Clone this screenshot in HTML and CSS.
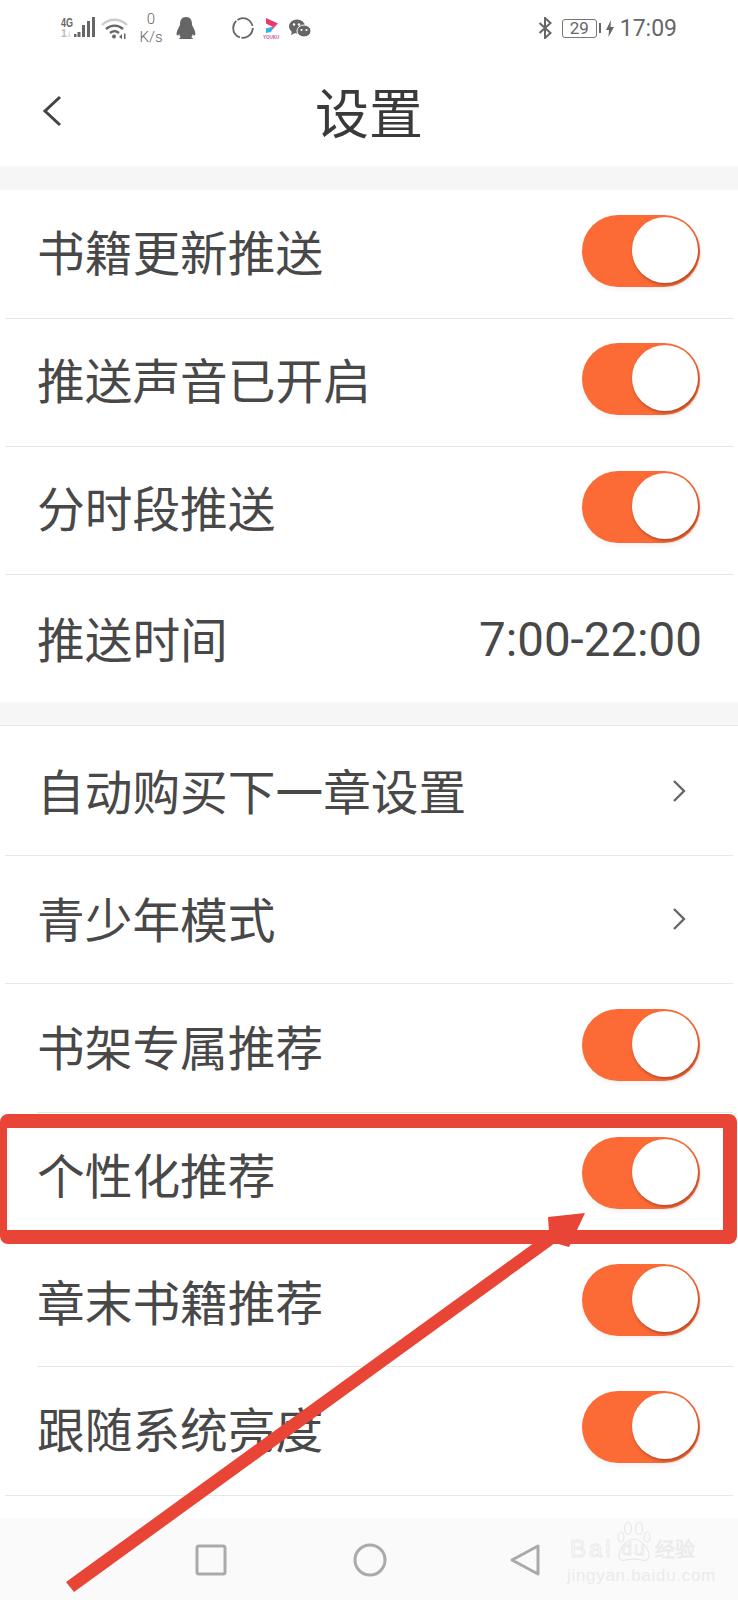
FILE: index.html
```html
<!doctype html>
<html lang="zh-CN">
<head>
  <meta charset="UTF-8">
  <meta name="viewport" content="width=device-width, initial-scale=1">
  <title>设置</title>

  <link rel="stylesheet" href="styles.css">
</head>
<body>

<main>
  <div class="status">
    <div class="status-left">
      <svg class="ic-signal" width="34" height="24" viewBox="0 0 34 24">
        <text x="0" y="11" class="net" textLength="12" lengthAdjust="spacingAndGlyphs">4G</text>
        <text x="0" y="21" class="net faint" textLength="11" lengthAdjust="spacingAndGlyphs">1↓</text>
        <path d="M13 21v-3h2.500v3zM16.500 21v-5h3v5zM21 21v-12h3v12zM26 21v-16h3v16zM31 21v-20h3v20z" fill="#666"/>
      </svg>
      <svg class="ic-wifi" width="27" height="22" viewBox="0 0 27 22">
        <path d="M1 8c7-7 18-7 25 0" fill="none" stroke="#ccc" stroke-width="2.400"/>
        <path d="M5 12c5-4.500 12-4.500 17 0M9 16c3-2.500 6-2.500 9 0" fill="none" stroke="#666" stroke-width="2.400"/>
        <circle cx="13" cy="19.500" r="2" fill="#666"/>
        <path d="M18 20l3-3v5zM23 16.500h1.500v5.500h-1.500z" fill="#666"/>
      </svg>
      <div class="speed"><span>0</span><span>K/s</span></div>
      <svg class="ic-qq" width="20" height="23" viewBox="0 0 20 23">
        <path d="M10 0c4.500 0 6 3.500 6 7 0 1.500 1 3 2 5 1.500 3 2 6 .5 6.500-.6.2-1.200-.5-1.800-1.500 0 1.500-.7 2.500-1.700 3.300 1.200.4 2 1 2 1.700H3c0-.7.800-1.300 2-1.700-1-.8-1.700-1.800-1.700-3.300-.6 1-1.200 1.700-1.800 1.500C0 18 .5 15 2 12c1-2 2-3.500 2-5 0-3.500 1.500-7 6-7z" fill="#666"/>
      </svg>
      <svg class="ic-ring" width="22" height="22" viewBox="0 0 22 22">
        <circle cx="11" cy="11" r="9.800" fill="none" stroke="#666" stroke-width="1.800" stroke-dasharray="17 1.500 20 1.500 19 2.500"/>
      </svg>
      <svg class="ic-youku" width="18" height="21" viewBox="0 0 18 21">
        <path d="M3 0l12 5.500-5 3.500-7-3.500z" fill="#e8386d"/>
        <path d="M15 5.500L8 13H3v-2.500L10 9z" fill="#e8386d"/>
        <path d="M3 10.500L10 9l-2 5-5 1z" fill="#29b6e8"/>
        <text x="0" y="20.500" class="youku">YOUKU</text>
      </svg>
      <svg class="ic-wechat" width="22" height="19" viewBox="0 0 22 19">
        <ellipse cx="8" cy="7.500" rx="8" ry="7" fill="#666"/>
        <path d="M3 12l-1 4 4-2z" fill="#666"/>
        <ellipse cx="15" cy="12" rx="7" ry="6" fill="#666" stroke="#fff" stroke-width="1"/>
        <circle cx="5" cy="5.500" r="1.200" fill="#fff"/>
        <circle cx="10" cy="5.500" r="1.200" fill="#fff"/>
        <circle cx="12.500" cy="11" r="1.100" fill="#fff"/>
        <circle cx="17.500" cy="11" r="1.100" fill="#fff"/>
      </svg>
    </div>
    <div class="status-right">
      <svg class="ic-bt" width="15" height="22" viewBox="0 0 15 22">
        <path d="M1.500 6l11 10-5.500 5V1l5.500 5-11 10" fill="none" stroke="#666" stroke-width="2"/>
      </svg>
      <div class="battery"><span>29</span></div>
      <div class="battery-nub"></div>
      <svg class="ic-bolt" width="8" height="17" viewBox="0 0 8 17">
        <path d="M5 0L0 10h3l-.5 7L8 7H4.500z" fill="#666"/>
      </svg>
      <span class="clock">17:09</span>
    </div>
  </div>

  <header class="topbar">
    <svg class="back" width="20" height="32" viewBox="0 0 20 32">
      <path d="M18 2L3 16l15 14" fill="none" stroke="#444" stroke-width="3"/>
    </svg>
    <h1>设置</h1>
  </header>

  <div class="gap"></div>

  <section>
    <div class="row"><span class="label">书籍更新推送</span><div class="toggle"></div></div>
    <div class="row"><span class="label">推送声音已开启</span><div class="toggle"></div></div>
    <div class="row"><span class="label">分时段推送</span><div class="toggle"></div></div>
    <div class="row plain last"><span class="label">推送时间</span><span class="value">7:00-22:00</span></div>
  </section>

  <div class="gap gap-line"></div>

  <section>
    <div class="row plain">
      <span class="label">自动购买下一章设置</span>
      <svg class="more" width="14" height="24" viewBox="0 0 14 24"><path d="M2 2l10 10L2 22" fill="none" stroke="#666" stroke-width="2.400"/></svg>
    </div>
    <div class="row plain">
      <span class="label">青少年模式</span>
      <svg class="more" width="14" height="24" viewBox="0 0 14 24"><path d="M2 2l10 10L2 22" fill="none" stroke="#666" stroke-width="2.400"/></svg>
    </div>
    <div class="row lower inset"><span class="label">书架专属推荐</span><div class="toggle"></div></div>
    <div class="row short nosep"><span class="label">个性化推荐</span><div class="toggle"></div></div>
    <div class="row short inset"><span class="label">章末书籍推荐</span><div class="toggle"></div></div>
    <div class="row tall"><span class="label">跟随系统亮度</span><div class="toggle"></div></div>
  </section>

  <div class="spacer"></div>

  <nav class="navbar">
    <svg class="nav-square" width="32" height="32" viewBox="0 0 32 32"><rect x="2" y="2" width="28" height="28" rx="2" fill="none" stroke="#aaa" stroke-width="3"/></svg>
    <svg width="34" height="34" viewBox="0 0 34 34"><circle cx="17" cy="17" r="15" fill="none" stroke="#aaa" stroke-width="3"/></svg>
    <svg width="32" height="34" viewBox="0 0 32 34"><path d="M29 3L3 17l26 14z" fill="none" stroke="#aaa" stroke-width="3" stroke-linejoin="round"/></svg>
  </nav>
</main>

<div class="watermark">
  <svg class="paw" width="34" height="42" viewBox="0 0 34 42">
    <g fill="none" stroke="#e8e8e8" stroke-width="1.200">
      <ellipse cx="4" cy="15" rx="3" ry="5"/>
      <ellipse cx="11" cy="6.500" rx="3.500" ry="6"/>
      <ellipse cx="22" cy="6.500" rx="3.500" ry="6"/>
      <ellipse cx="30" cy="15" rx="3" ry="5"/>
      <path d="M17 17c-6 0-15 9-15 16 0 6 4 6 7 5 5-1 11-1 16 0 3 1 7 1 7-5 0-7-9-16-15-16z"/>
    </g>
  </svg>
  <div class="wm-top"><span class="wm-bai">Bai</span><span class="wm-du">du</span><span class="wm-cn">经验</span></div>
  <div class="wm-sub">jingyan.baidu.com</div>
</div>

<div class="highlight"></div>
<svg class="arrow" width="738" height="1600" viewBox="0 0 738 1600">
  <path d="M66 1582L549 1232L548 1217L585 1213L569 1247L555 1243L74 1592z" fill="#e84536"/>
</svg>

</body>
</html>
```

FILE: styles.css
```css
* {
    margin: 0;
    padding: 0;
    box-sizing: border-box;
}

html, body {
    height: 100%;
}

body {
    position: relative;
    overflow: hidden;
    background-color: #fff;
    color: #484848;
    font-family: "Noto Sans CJK SC", "Noto Sans", sans-serif;
}

main {
    height: 1600px;
    display: flex;
    flex-direction: column;
}

.status {
    height: 56px;
    display: flex;
    justify-content: space-between;
    align-items: center;
    padding: 0 61px;
    color: #666;
}

.status-left, .status-right {
    display: flex;
    align-items: center;
}

.net {
    font-family: "Liberation Sans", sans-serif;
    font-size: 12px;
    font-weight: bold;
    fill: #666;
}

.net.faint {
    fill: #bbb;
    font-size: 10px;
}

.youku {
    font-family: "Liberation Sans", sans-serif;
    font-size: 4.500px;
    font-weight: bold;
    fill: #c55a9a;
}

.ic-wifi {
    margin-left: 6px;
}

.speed {
    width: 26px;
    margin-left: 10px;
    display: flex;
    flex-direction: column;
    align-items: center;
    font-family: Roboto, sans-serif;
    font-size: 15px;
    font-weight: 300;
    line-height: 18px;
}

.ic-qq {
    margin-left: 12px;
}

.ic-ring {
    margin-left: 36px;
}

.ic-youku {
    margin-left: 9px;
}

.ic-wechat {
    margin-left: 8px;
}

.battery {
    width: 35px;
    height: 19px;
    margin-left: 9px;
    border: 1px solid #777;
    border-radius: 3px;
    display: flex;
    align-items: center;
    justify-content: center;
    font-family: Roboto, sans-serif;
    font-size: 17px;
    line-height: 1;
}

.battery-nub {
    width: 2px;
    height: 10px;
    margin-left: 2px;
    background-color: #666;
}

.ic-bolt {
    margin-left: 5px;
}

.clock {
    margin-left: 6px;
    font-family: Roboto, sans-serif;
    font-size: 23px;
    line-height: 1;
}

.topbar {
    height: 110px;
    display: flex;
    align-items: center;
    justify-content: center;
    position: relative;
}

.topbar h1 {
    font-size: 54px;
    font-weight: 400;
    line-height: 1;
    color: #3a3a3a;
}

.back {
    position: absolute;
    left: 42px;
    top: 39px;
}

.gap {
    height: 24px;
    background-color: #f6f6f6;
}

.gap-line {
    border-bottom: 1px solid #e8e8e8;
}

.row {
    height: 128.500px;
    padding: 0 38px 7px 37px;
    display: flex;
    align-items: center;
    justify-content: space-between;
    font-size: 47.700px;
    line-height: 1;
    position: relative;
}

section:first-of-type .row {
    height: 128px;
}

.row.plain {
    padding-bottom: 2px;
}

.row.lower {
    padding-bottom: 4px;
}

.row.short {
    height: 127px;
    padding-bottom: 4px;
}

.row.tall {
    height: 129px;
    padding-bottom: 6px;
}

.row::after {
    content: "";
    position: absolute;
    left: 5px;
    right: 5px;
    bottom: -1px;
    height: 1px;
    background-color: #e8e8e8;
}

.row.inset::after {
    left: 37px;
}

.row.last::after, .row.nosep::after {
    display: none;
}

.label {
    margin-top: 1px;
}

.value {
    padding-top: 8px;
    margin-right: -2px;
    font-family: Roboto, sans-serif;
    font-size: 47.500px;
}

.more {
    margin: 3px 14px 0 0;
}

.toggle {
    width: 118px;
    height: 72px;
    border-radius: 36px;
    background-color: #fc6a35;
    box-shadow: 0 3px 4px rgba(0, 0, 0, .05);
    position: relative;
}

.toggle::after {
    content: "";
    position: absolute;
    right: 2px;
    top: 2px;
    width: 66px;
    height: 66px;
    border-radius: 50%;
    background-color: #fff;
    box-shadow: 1px 2px 3px rgba(150, 60, 30, .7);
}

.spacer {
    flex: 1;
}

.navbar {
    height: 82px;
    background-color: #fafafa;
    display: flex;
    align-items: center;
    padding: 2px 0 0 195px;
    gap: 122px;
}

.nav-square {
    margin-right: 4px;
}

.watermark {
    position: absolute;
    left: 567px;
    top: 1536px;
    width: 132px;
    color: #fafafa;
    font-family: "Liberation Sans", sans-serif;
}

.paw {
    position: absolute;
    left: 50px;
    top: -14px;
}

.wm-top {
    display: flex;
    align-items: center;
    font-size: 24px;
    line-height: 26px;
    white-space: nowrap;
    -webkit-text-stroke: 1px #ebebeb;
}

.wm-bai {
    width: 44px;
    margin-left: 3px;
    letter-spacing: 3px;
}

.wm-du {
    width: 32px;
    margin-left: 4px;
    font-size: 19px;
    letter-spacing: 2px;
    text-align: center;
}

.wm-cn {
    margin-left: 5px;
    font-family: "Noto Sans CJK SC", sans-serif;
    font-size: 20px;
    font-weight: 300;
}

.wm-sub {
    margin-top: 5px;
    font-size: 17px;
    letter-spacing: .7px;
    line-height: 18px;
    white-space: nowrap;
    color: #ebebeb;
}

.highlight {
    position: absolute;
    left: 0;
    top: 1114px;
    width: 737px;
    height: 130px;
    border: 14px solid #e84536;
    border-left-width: 7px;
    border-radius: 8px;
}

.arrow {
    position: absolute;
    left: 0;
    top: 0;
}
```
